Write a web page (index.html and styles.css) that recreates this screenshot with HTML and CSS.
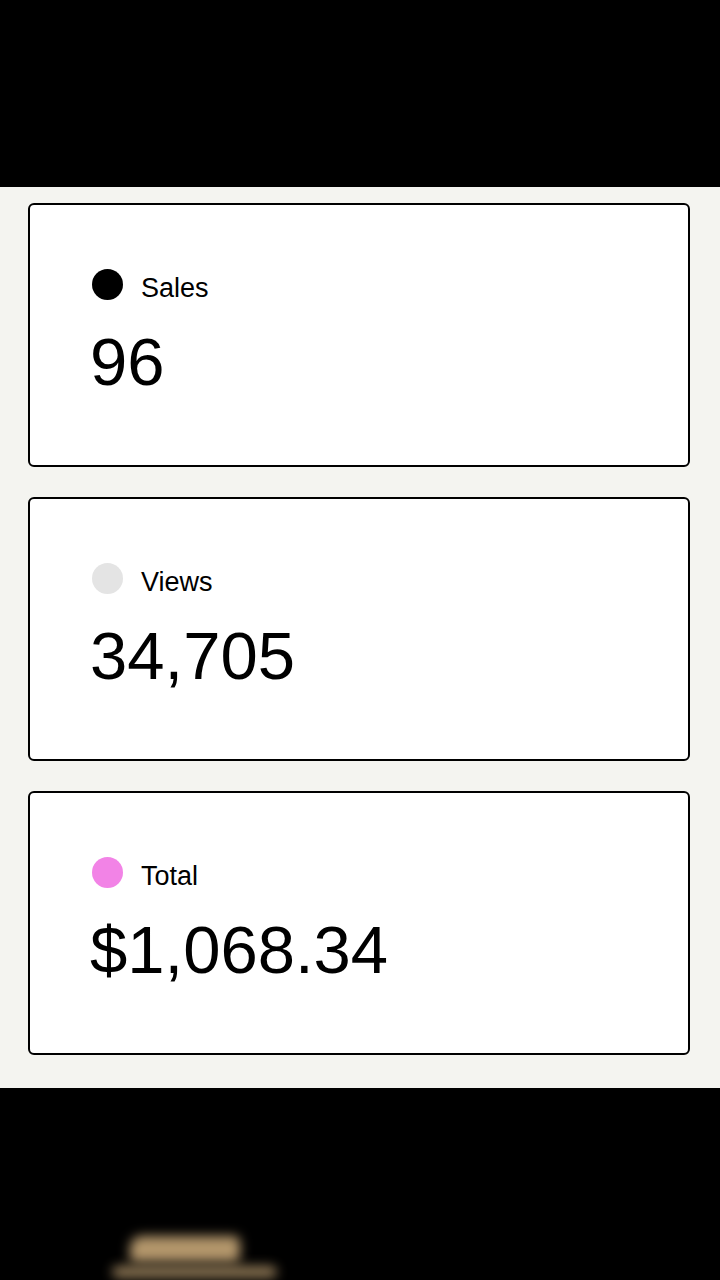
FILE: index.html
```html
<!DOCTYPE html>
<html lang="en">
<head>
    <meta charset="UTF-8">
    <meta name="viewport" content="width=device-width, initial-scale=1.0">
    <title>Stats</title>
    <link rel="stylesheet" href="styles.css">
</head>
<body>
    <div class="top-bar"></div>

    <main class="stats">
        <div class="stat-card">
            <div class="stat-label"><span class="dot dot-sales"></span><span class="label-text">Sales</span></div>
            <div class="stat-value">96</div>
        </div>
        <div class="stat-card">
            <div class="stat-label"><span class="dot dot-views"></span><span class="label-text">Views</span></div>
            <div class="stat-value">34,705</div>
        </div>
        <div class="stat-card">
            <div class="stat-label"><span class="dot dot-total"></span><span class="label-text">Total</span></div>
            <div class="stat-value">$1,068.34</div>
        </div>
    </main>

    <div class="bottom-bar">
        <div class="blur-shape blur-top"></div>
        <div class="blur-shape blur-bottom"></div>
    </div>
</body>
</html>
```

FILE: styles.css
```css
body {
    margin: 0;
    background-color: #000;
    font-family: "Liberation Sans", Arial, sans-serif;
    color: #000;
}

.top-bar {
    height: 187px;
    background-color: #000;
}

.stats {
    background-color: #f4f4f0;
    padding: 16px 30px 33px 28px;
    display: flex;
    flex-direction: column;
    gap: 30px;
}

.stat-card {
    height: 264px;
    box-sizing: border-box;
    background-color: #fff;
    border: 2px solid #000;
    border-radius: 6px;
    padding: 63px 62px 0;
}

.stat-label {
    display: flex;
    align-items: center;
    gap: 18px;
    font-size: 27px;
    height: 32px;
}

.label-text {
    padding-top: 8px;
}

.dot {
    width: 31px;
    height: 31px;
    border-radius: 50%;
    display: inline-block;
}

.dot-sales {
    background-color: #000;
}

.dot-views {
    background-color: #e4e4e4;
}

.dot-total {
    background-color: #f283e6;
}

.stat-value {
    font-size: 67px;
    line-height: 1;
    margin-top: 28px;
    margin-left: -2px;
}

.bottom-bar {
    height: 192px;
    background-color: #000;
    position: relative;
    overflow: hidden;
}

.blur-shape {
    position: absolute;
    background-color: #b3966b;
    filter: blur(6px);
}

.blur-top {
    left: 130px;
    top: 148px;
    width: 110px;
    height: 26px;
    border-radius: 12px 6px 6px 4px;
}

.blur-bottom {
    left: 112px;
    top: 178px;
    width: 165px;
    height: 12px;
    border-radius: 6px;
    opacity: 0.8;
}
```
